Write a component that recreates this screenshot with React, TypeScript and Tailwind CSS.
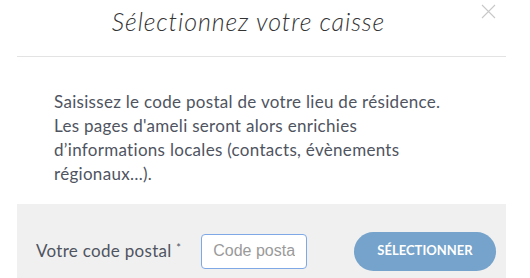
export default function App() {
  return (
    <div className="min-h-[278px] w-[530px] overflow-hidden bg-white font-['Lato',sans-serif]">
      <div className="ml-[17px] w-[489px]">
        <header className="relative flex h-[57px] items-start justify-center border-b border-[#e3e3e3] pr-[26px] pt-[4px]">
          <h2 className="text-[25px] font-light italic leading-[34px] tracking-[0.9px] text-[#333]">
            Sélectionnez votre caisse
          </h2>
          <button
            type="button"
            aria-label="Fermer"
            className="absolute right-[10px] top-[4px] h-[15px] w-[15px]"
          >
            <svg viewBox="0 0 15 15" className="h-[15px] w-[15px]">
              <path d="M1 1L14 14M14 1L1 14" stroke="#c8c8c8" strokeWidth="1.1" />
            </svg>
          </button>
        </header>

        <p className="px-[37px] pt-[33px] pb-[18px] text-[17px] leading-[24px] tracking-[0.3px] text-[#4f5461]">
          Saisissez le code postal de votre lieu de résidence.
          <br />
          Les pages d'ameli seront alors enrichies
          <br />
          d’informations locales (contacts, évènements
          <br />
          régionaux…).
        </p>

        <div className="flex h-[80px] items-center bg-[#f0f0f0] pl-[19px] pr-[10px] pt-[14px]">
          <label htmlFor="cp" className="text-[17px] tracking-[0.3px] text-[#4f5461]">
            Votre code postal <sup className="text-[11px]">*</sup>
          </label>
          <input
            id="cp"
            placeholder="Code postal"
            className="ml-[20px] h-[35px] w-[106px] rounded-[4px] border border-[#7fa9e6] bg-white px-[11px] font-['Liberation_Sans',sans-serif] text-[16px] text-[#333] placeholder:text-[#9a9a9a] outline-none"
          />
          <button
            type="button"
            className="ml-auto h-[39px] w-[142px] rounded-full bg-[#75a3cb] text-[13px] font-bold uppercase text-white"
          >
            Sélectionner
          </button>
        </div>
      </div>
    </div>
  );
}
